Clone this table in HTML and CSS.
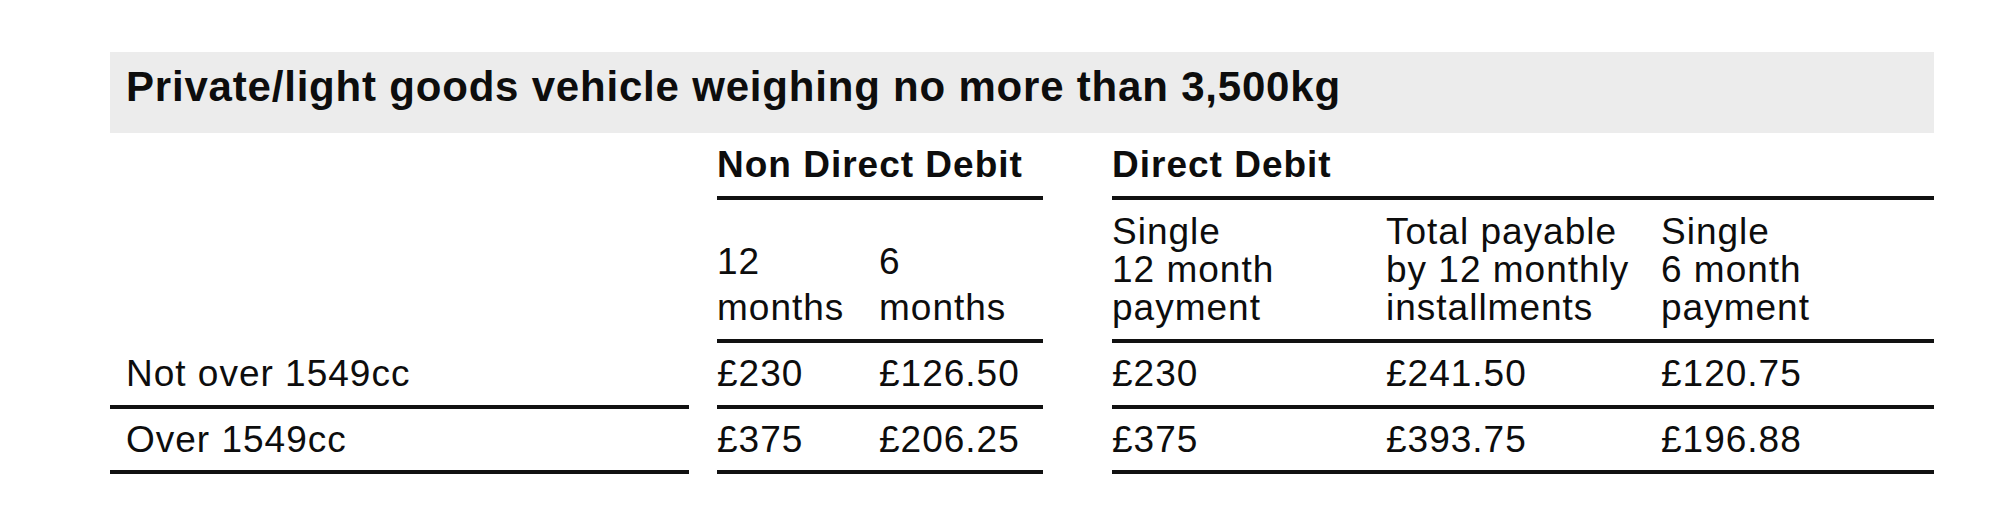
FILE: index.html
```html
<!DOCTYPE html>
<html lang="en">
<head>
<meta charset="utf-8">
<title>Vehicle tax rates</title>
<link rel="stylesheet" href="styles.css">
</head>
<body>
<div class="page">
  <h2 class="banner">Private/light goods vehicle weighing no more than 3,500kg</h2>
  <div class="rates">
    <div class="group g-ndd">Non Direct Debit</div>
    <div class="group g-dd">Direct Debit</div>

    <div class="sub loose c1">12<br>months</div>
    <div class="sub loose c2">6<br>months</div>
    <div class="sub c3">Single<br>12 month<br>payment</div>
    <div class="sub c4">Total payable<br>by 12 monthly<br>installments</div>
    <div class="sub c5">Single<br>6 month<br>payment</div>

    <div class="cell label r1">Not over 1549cc</div>
    <div class="cell c1 r1">£230</div>
    <div class="cell c2 r1">£126.50</div>
    <div class="cell c3 r1">£230</div>
    <div class="cell c4 r1">£241.50</div>
    <div class="cell c5 r1">£120.75</div>

    <div class="cell label r2">Over 1549cc</div>
    <div class="cell c1 r2">£375</div>
    <div class="cell c2 r2">£206.25</div>
    <div class="cell c3 r2">£375</div>
    <div class="cell c4 r2">£393.75</div>
    <div class="cell c5 r2">£196.88</div>
  </div>
</div>
</body>
</html>
```
FILE: styles.css
```css
html, body {
  margin: 0;
  padding: 0;
  background: #ffffff;
}

body {
  font-family: "Liberation Sans", Arial, Helvetica, sans-serif;
  color: #0d0d0d;
}

.page {
  padding: 52px 0 0 110px;
  width: 1824px;
}

.banner {
  margin: 0;
  background: #ececec;
  font-size: 42px;
  font-weight: bold;
  letter-spacing: 0.8px;
  line-height: 46px;
  padding: 12px 0 23px 16px;
  color: #0d0d0d;
}

.rates {
  display: grid;
  grid-template-columns: 579px 28px 162px 164px 69px 274px 275px 273px;
  grid-template-rows: auto auto auto auto;
  font-size: 37px;
  letter-spacing: 1px;
}

.group {
  grid-row: 1;
  font-weight: bold;
  line-height: 63px;
  border-bottom: 4px solid #111111;
}

.g-ndd { grid-column: 3 / 5; }
.g-dd { grid-column: 6 / 9; }

.sub {
  grid-row: 2;
  align-self: stretch;
  display: flex;
  flex-direction: column;
  justify-content: flex-end;
  line-height: 38px;
  padding: 13px 0 12px 0;
  border-bottom: 4px solid #111111;
  white-space: nowrap;
}

.sub.loose {
  line-height: 46px;
  padding-bottom: 8px;
}

.c1 { grid-column: 3; }
.c2 { grid-column: 4; }
.c3 { grid-column: 6; }
.c4 { grid-column: 7; }
.c5 { grid-column: 8; }

.cell {
  border-bottom: 4px solid #111111;
  white-space: nowrap;
}

.label {
  grid-column: 1;
  padding-left: 16px;
}

.r1 {
  grid-row: 3;
  line-height: 62px;
}

.r2 {
  grid-row: 4;
  line-height: 61px;
}
```
